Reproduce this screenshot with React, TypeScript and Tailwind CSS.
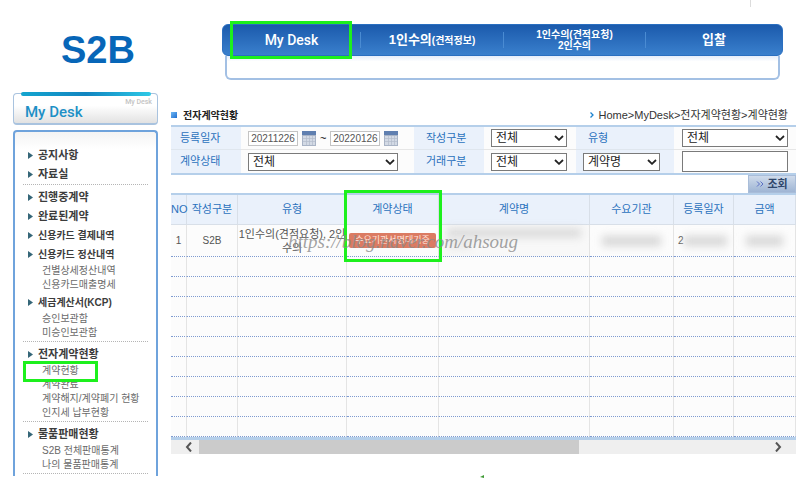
import clsx from "clsx";
import React from "react";

const navItems = [
  { main: "My Desk", latin: true },
  { main: "1인수의", sub: "(견적정보)" },
  { main: "1인수의", sub: "(견적요청)", second: "2인수의" },
  { main: "입찰" },
];

const menuSections = [
  [{ label: "공지사항" }, { label: "자료실" }],
  [
    { label: "진행중계약" },
    { label: "완료된계약" },
    { label: "신용카드 결제내역", small: true },
    {
      label: "신용카드 정산내역",
      small: true,
      children: ["건별상세정산내역", "신용카드매출명세"],
    },
    {
      label: "세금계산서(KCP)",
      small: true,
      children: ["승인보관함", "미승인보관함"],
    },
  ],
  [
    {
      label: "전자계약현황",
      children: [
        "계약현황",
        "계약완료",
        "계약해지/계약폐기 현황",
        "인지세 납부현황",
      ],
    },
  ],
  [
    {
      label: "물품판매현황",
      children: ["S2B 전체판매통계", "나의 물품판매통계"],
    },
  ],
] as { label: string; small?: boolean; children?: string[] }[][];

const columns = [
  { label: "NO", width: "w-4" },
  { label: "작성구분", width: "w-[51px]" },
  { label: "유형", width: "w-[109px]" },
  { label: "계약상태", width: "w-[92px]" },
  { label: "계약명", width: "" },
  { label: "수요기관", width: "w-[84px]" },
  { label: "등록일자", width: "w-[60px]" },
  { label: "금액", width: "w-[62px]" },
];

const Highlight = ({ className }: { className: string }) => (
  <span
    className={clsx(
      "pointer-events-none absolute z-10 border-3 border-[#1df01d]",
      className,
    )}
  />
);

const Header = () => {
  return (
    <header className="flex pt-6">
      <a
        href="#"
        className="ml-[13px] flex h-[52px] w-[209px] items-center pl-12 text-[38px] leading-none font-bold text-[#0766b8]"
      >
        S2B
      </a>
      <nav className="mr-[17px] flex-1">
        <ul className="grid h-8 grid-cols-[137px_143px_142px_1fr] items-center rounded-md border border-[#2a6fc0] bg-linear-to-b from-[#1b5aac] to-[#3a80cd] font-bold text-white">
          {navItems.map((item, index) => (
            <li
              key={index}
              className={clsx(
                "relative flex h-4 items-center justify-center",
                index > 0 && "border-l border-[#4a8bd2]",
              )}
            >
              <a
                href="#"
                className={clsx(
                  "text-center whitespace-nowrap",
                  item.second && "text-[10px] leading-[11px]",
                  item.latin && "font-['Roboto'] text-[14px] leading-4 font-medium",
                  !item.second && !item.latin && "text-[13px] leading-4",
                )}
              >
                {item.main}
                {item.sub && <span className="text-[10px]">{item.sub}</span>}
                {item.second && <span className="block">{item.second}</span>}
              </a>
              {index === 0 && (
                <Highlight className="-top-[11px] left-[7px] h-[38px] w-[122px]" />
              )}
            </li>
          ))}
        </ul>
        <div className="mx-[3px] h-6 rounded-b-md border-x-2 border-b-2 border-[#a3c0e4] bg-linear-to-b from-[#e4edfa] to-white to-25%" />
      </nav>
    </header>
  );
};

const Sidebar = () => {
  return (
    <aside className="w-[145px] shrink-0">
      <div className="relative flex h-8 justify-between rounded-sm border border-b-2 border-[#a9c3df] bg-linear-to-b from-white from-40% to-[#e2e2e2]">
        <span className="absolute -top-0.5 right-1.5 left-[7px] h-1 rounded-sm bg-linear-to-r from-[#14a5cf] via-[#1285c0] to-[#2ec9e6]" />
        <h2 className="pt-2 pl-[11px] font-['Roboto'] text-[15px] leading-5 font-medium text-[#1d90c6]">
          My Desk
        </h2>
        <span className="pt-1 pr-[5px] font-['Roboto'] text-[7px] leading-[9px] font-medium text-[#c4c4c4]">
          My Desk
        </span>
      </div>
      <nav className="mt-[5px] rounded-t-sm border-x-2 border-t-2 border-[#6fa3dc] bg-linear-to-b from-[#f4f4f4] to-white to-5% px-2 pt-[11px] pb-0.5">
        {menuSections.map((section, index) => (
          <ul
            key={index}
            className="border-b border-dotted border-[#b5b5b5] pt-[3px]"
          >
            {section.map((item) => (
              <li key={item.label} className={clsx(item.children && "pb-px")}>
                <a
                  href="#"
                  className={clsx(
                    "flex h-[19px] items-center gap-[5px] pl-[5px] font-bold whitespace-nowrap text-[#3c3c3c]",
                    item.small ? "text-[10px]" : "text-[11px]",
                  )}
                >
                  <svg viewBox="0 0 5 7" className="h-[7px] w-[5px]">
                    <path d="M0 0L5 3.5L0 7Z" fill="#356678" />
                  </svg>
                  {item.label}
                </a>
                {item.children && (
                  <ul>
                    {item.children.map((child) => (
                      <li key={child} className="relative">
                        <a
                          href="#"
                          className="block h-3.5 pl-[19px] text-[10px] leading-3.5 whitespace-nowrap text-[#6a6a6a]"
                        >
                          {child}
                        </a>
                        {child === "계약현황" && (
                          <Highlight className="-top-[3px] left-0 h-[21px] w-[75px]" />
                        )}
                      </li>
                    ))}
                  </ul>
                )}
              </li>
            ))}
          </ul>
        ))}
      </nav>
    </aside>
  );
};

const Select = ({
  id,
  label,
  value,
  className,
}: {
  id: string;
  label?: string;
  value: string;
  className?: string;
}) => (
  <div className={clsx("relative", className)}>
    <select
      id={id}
      aria-label={label}
      className="block h-[18px] w-full appearance-none border border-[#7a7a7a] bg-white pl-1 text-[12px] leading-4 text-[#222]"
    >
      <option>{value}</option>
    </select>
    <svg
      viewBox="0 0 10 6"
      className="pointer-events-none absolute top-1.5 right-[3px] h-1.5 w-2.5"
    >
      <path d="M1 1L5 4.8L9 1" fill="none" stroke="#222" strokeWidth="1.8" />
    </svg>
  </div>
);

const CalendarIcon = () => (
  <svg viewBox="0 0 14 15" className="h-[15px] w-3.5">
    <rect width="14" height="15" fill="#a9b4c6" />
    <rect width="14" height="4" fill="#5f7fb0" />
    <rect x="1" y="5" width="12" height="9" fill="#d3dae5" />
    <path
      d="M1 7.5H13M1 10.5H13M4.5 5V14M7.5 5V14M10.5 5V14"
      stroke="#b3bccb"
      strokeWidth="0.7"
    />
  </svg>
);

const DateField = ({
  id,
  label,
  value,
}: {
  id: string;
  label?: string;
  value: string;
}) => (
  <>
    <input
      id={id}
      aria-label={label}
      defaultValue={value}
      className="h-[15px] w-[50px] border border-[#c4c4c4] bg-white text-center text-[10px] text-[#555]"
    />
    <button type="button" aria-label="달력" className="ml-1">
      <CalendarIcon />
    </button>
  </>
);

const labelCell = "flex items-center bg-[#eaf1fb] text-[11px] text-[#2a72bd]";
const fieldCell = "flex items-center bg-[#fcfcfc]";

const SearchForm = () => {
  return (
    <form>
      <div className="grid grid-cols-[70px_173px_70px_92px_98px_1fr] grid-rows-[22px_24px] border-y-2 border-[#b5cfea]">
        <label htmlFor="from" className={clsx(labelCell, "pl-[9px]")}>
          등록일자
        </label>
        <div className={clsx(fieldCell, "pl-[7px]")}>
          <DateField id="from" value="20211226" />
          <span className="mx-1 text-[11px]">~</span>
          <DateField id="to" label="종료일자" value="20220126" />
        </div>
        <label htmlFor="write" className={clsx(labelCell, "pl-3")}>
          작성구분
        </label>
        <div className={clsx(fieldCell, "pl-[7px]")}>
          <Select id="write" value="전체" className="w-19" />
        </div>
        <label htmlFor="type" className={clsx(labelCell, "pl-3")}>
          유형
        </label>
        <div className={clsx(fieldCell, "px-2")}>
          <Select id="type" value="전체" className="w-full" />
        </div>

        <label
          htmlFor="state"
          className={clsx(labelCell, "border-t border-[#dfe6ee] pl-[9px]")}
        >
          계약상태
        </label>
        <div className={clsx(fieldCell, "border-t border-[#e6e6e6] pl-[7px]")}>
          <Select id="state" value="전체" className="w-[150px]" />
        </div>
        <label
          htmlFor="deal"
          className={clsx(labelCell, "border-t border-[#dfe6ee] pl-3")}
        >
          거래구분
        </label>
        <div className={clsx(fieldCell, "border-t border-[#e6e6e6] pl-[7px]")}>
          <Select id="deal" value="전체" className="w-19" />
        </div>
        <div className={clsx(labelCell, "border-t border-[#dfe6ee] pl-[7px]")}>
          <Select
            id="field"
            label="검색조건"
            value="계약명"
            className="w-[77px]"
          />
        </div>
        <div className={clsx(fieldCell, "border-t border-[#e6e6e6] px-2")}>
          <input
            aria-label="검색어"
            className="h-[21px] w-full border border-[#7a7a7a] bg-white px-1 text-[12px]"
          />
        </div>
      </div>
      <button
        type="submit"
        className="ml-auto flex h-[18px] w-12 items-center justify-center gap-[3px] border border-[#a9bdd9] bg-linear-to-b from-[#cfdbeb] to-[#9fb5d4] text-[11px] leading-none font-bold text-[#2f466b]"
      >
        <svg viewBox="0 0 8 6" className="h-1.5 w-2">
          <path
            d="M1 0.5L3.5 3L1 5.5M4.5 0.5L7 3L4.5 5.5"
            fill="none"
            stroke="#5a6fc4"
          />
        </svg>
        조회
      </button>
    </form>
  );
};

const Redacted = ({ className }: { className: string }) => (
  <span className={clsx("block bg-[#d6d6d6] blur-xs", className)} />
);

const ContractTable = () => {
  return (
    <div className="relative">
      <table className="w-full table-fixed border-separate border-spacing-0 border-t-2 border-b-3 border-[#b5cfea] bg-[#fcfcfc] text-center">
        <thead>
          <tr className="h-[30px] bg-[#eaf1fb]">
            {columns.map((col) => (
              <th
                key={col.label}
                className={clsx(
                  "relative border-r border-b border-[#d8dfe8] p-0 text-[11px] font-normal whitespace-nowrap text-[#2a72bd]",
                  col.width,
                )}
              >
                {col.label}
                {col.label === "계약상태" && (
                  <Highlight className="-top-[5px] -left-[3px] h-[72px] w-[98px]" />
                )}
              </th>
            ))}
          </tr>
        </thead>
        <tbody className="text-[10px] text-[#555]">
          <tr className="h-8 *:border-r *:border-b *:border-r-[#e4e4e4] *:border-b-[#7f9bd0] *:p-0 *:[border-bottom-style:dotted]">
            <td>1</td>
            <td>S2B</td>
            <td className="text-[11px] leading-3.5">
              <span className="block whitespace-nowrap">
                1인수의(견적요청), 2인
              </span>
              수의
            </td>
            <td>
              <span className="mx-auto block h-[15px] w-[87px] rounded-xs bg-[#db7b62] text-[9px] leading-[15px] whitespace-nowrap text-[#ffe4dc]">
                수요기관서명대기중
              </span>
            </td>
            <td className="bg-[#f8f8f8] align-top">
              <Redacted className="mx-2 mt-1 h-2" />
              <Redacted className="mx-2 mt-1 h-2 w-6 opacity-50" />
            </td>
            <td>
              <Redacted className="mx-3 h-2.5" />
            </td>
            <td>
              <div className="flex items-center pl-1">
                <span>2</span>
                <Redacted className="mr-1.5 h-2.5 flex-1" />
              </div>
            </td>
            <td>
              <Redacted className="mx-3 h-2.5" />
            </td>
          </tr>
          {Array.from({ length: 9 }).map((_, index) => (
            <tr
              key={index}
              className="h-5 *:border-r *:border-b *:border-r-[#e4e4e4] *:border-b-[#7f9bd0] *:p-0 *:[border-bottom-style:dotted]"
            >
              {columns.map((col) => (
                <td key={col.label} />
              ))}
            </tr>
          ))}
        </tbody>
      </table>
      <span className="pointer-events-none absolute top-[37px] left-[117px] z-20 font-['Liberation_Serif'] text-[19px] leading-6 text-[#8a8a8a]/80 italic">
        https://blog.naver.com/ahsoug
      </span>
    </div>
  );
};

const ScrollBar = () => (
  <div className="grid h-3.5 grid-cols-[28px_61fr_29fr_36px] bg-[#efefef]">
    <button
      type="button"
      aria-label="왼쪽"
      className="flex items-center justify-end pr-[7px]"
    >
      <svg viewBox="0 0 7 10" className="h-2.5 w-[7px]">
        <path d="M6 0.5L2 5L6 9.5" fill="none" stroke="#555" strokeWidth="2" />
      </svg>
    </button>
    <span className="bg-[#cbcbcb]" />
    <span />
    <button
      type="button"
      aria-label="오른쪽"
      className="flex items-center justify-start pl-[15px]"
    >
      <svg viewBox="0 0 7 10" className="h-2.5 w-[7px]">
        <path d="M1 0.5L5 5L1 9.5" fill="none" stroke="#555" strokeWidth="2" />
      </svg>
    </button>
  </div>
);

const App = () => {
  return (
    <div className="relative bg-white font-['Liberation_Sans','Noto_Sans_CJK_KR',sans-serif]">
      <span className="absolute top-0 right-[49px] h-[7px] w-px bg-[#dcdcdc]" />
      <Header />
      <div className="flex gap-[13px] pt-[13px] pr-1 pl-[13px]">
        <Sidebar />
        <main className="min-w-0 flex-1 pt-3">
          <div className="flex h-5 items-center justify-between pr-2">
            <h1 className="flex items-center gap-1.5 text-[10px] font-bold text-[#222]">
              <span className="h-1.5 w-1.5 bg-linear-to-br from-[#6fb7f2] to-[#1f6fd0]" />
              전자계약현황
            </h1>
            <p className="flex items-center gap-1 text-[11px] text-[#333]">
              <svg viewBox="0 0 4 6" className="h-1.5 w-1">
                <path
                  d="M0.5 0.5L3 3L0.5 5.5"
                  fill="none"
                  stroke="#1c83cf"
                  strokeWidth="1.3"
                />
              </svg>
              Home&gt;MyDesk&gt;전자계약현황&gt;계약현황
            </p>
          </div>
          <SearchForm />
          <ContractTable />
          <ScrollBar />
          <svg
            viewBox="0 0 5 3"
            className="mt-[21px] ml-[309px] h-[3px] w-[5px]"
          >
            <path d="M0 2L4 0V3Z" fill="#3f9a35" />
          </svg>
        </main>
      </div>
      <span className="absolute right-[49px] -bottom-2 h-2 w-px bg-[#dcdcdc]" />
    </div>
  );
};

export default App;
